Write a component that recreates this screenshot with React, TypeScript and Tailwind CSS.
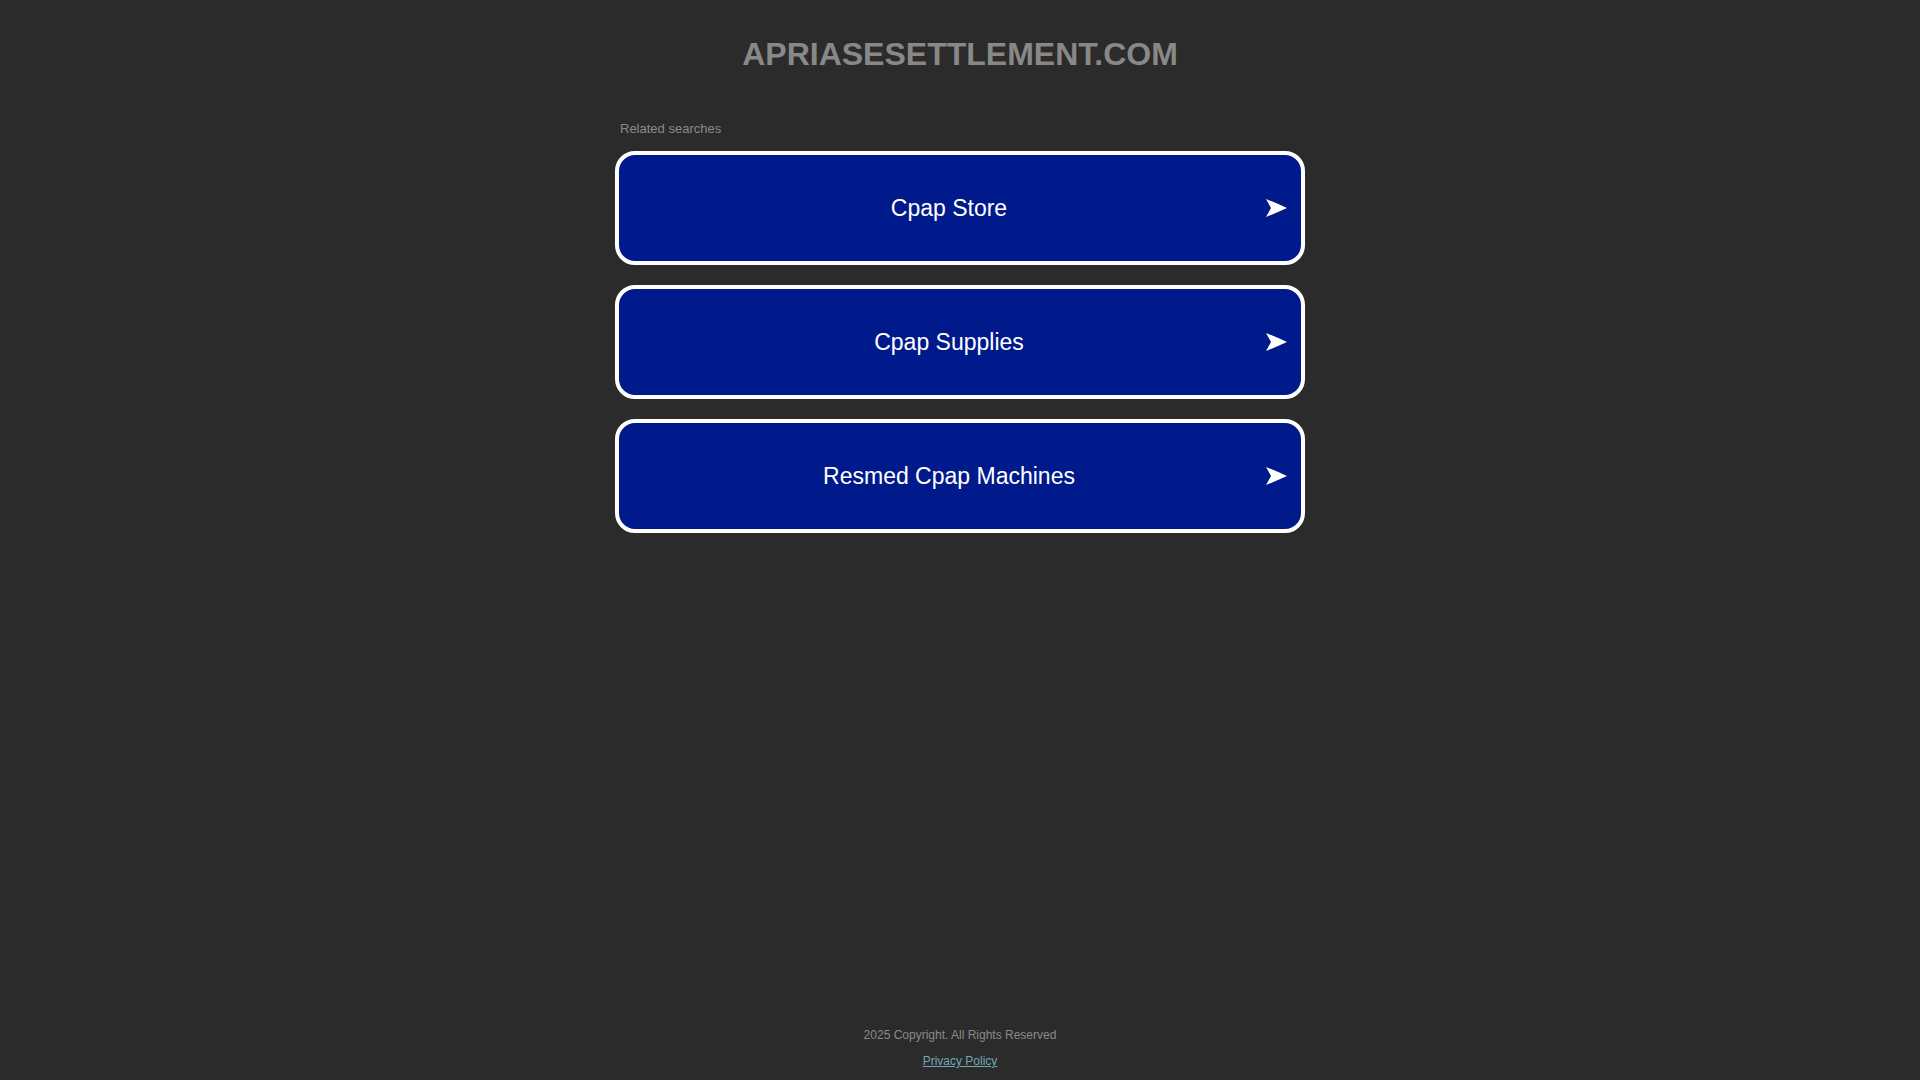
import React from 'react';

const searches = ['Cpap Store', 'Cpap Supplies', 'Resmed Cpap Machines'];

function Arrow() {
  return (
    <svg width="21" height="18" viewBox="0 0 21 18" className="shrink-0">
      <path d="M0 0 Q10 4 21 9 Q10 14 0 18 L5 9 Z" fill="#ffffff" />
    </svg>
  );
}

export default function App() {
  return (
    <div className="flex flex-col h-screen bg-[#2b2b2b] font-['Liberation_Sans',Arial,sans-serif]">
      <div className="w-[690px] mx-auto pt-9">
        {/* Domain heading */}
        <h1 className="text-center text-[32px] leading-[37px] font-bold text-[#888888]">APRIASESETTLEMENT.COM</h1>

        {/* Related searches */}
        <div className="mt-[48px] pl-[5px] text-[13px] leading-[15px] text-[#8a8a8a]">Related searches</div>
        <div className="mt-[15px] flex flex-col gap-[20px]">
          {searches.map((label) => (
            <a
              key={label}
              href="#"
              className="flex items-center h-[114px] box-border border-4 border-white rounded-[20px] bg-[#011a8b] pl-4 pr-[14px] gap-[3px] text-white"
            >
              <span className="flex-1 text-center text-[23px] leading-[26px]">{label}</span>
              <Arrow />
            </a>
          ))}
        </div>
      </div>

      {/* Footer */}
      <footer className="mt-auto pb-[12px] flex flex-col items-center gap-[12px] text-[12px] leading-[14px]">
        <div className="text-[#8a8a8a]">2025 Copyright. All Rights Reserved</div>
        <a href="#" className="text-[#71a9b1] underline">
          Privacy Policy
        </a>
      </footer>
    </div>
  );
}
